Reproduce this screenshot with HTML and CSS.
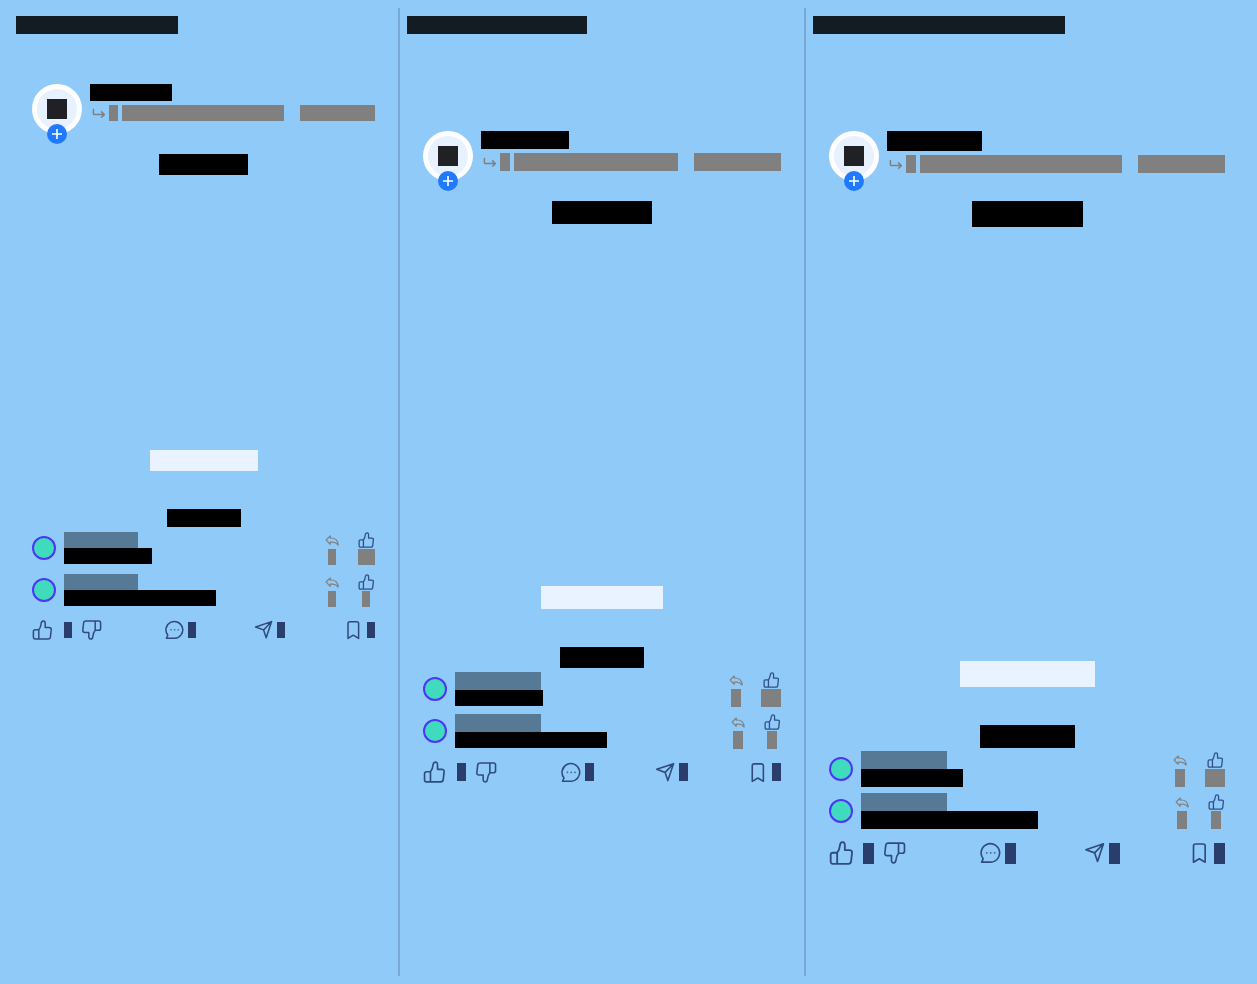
FILE: index.html
```html
<!DOCTYPE html>
<html lang="en">
<head>
<meta charset="utf-8">
<meta name="viewport" content="width=device-width, initial-scale=1">
<title>Posts</title>
<link rel="stylesheet" href="styles.css">
</head>
<body>
<svg class="sprite" aria-hidden="true">
  <symbol id="thumb" viewBox="0 0 20 20"><path d="M6.8 19V9.8M6.8 9.8Q8.8 7.4 9.2 3.2Q9.5 1 11.3 1Q13.3 1 13.2 4V7.6H17Q19.4 7.6 19.2 9.8L18.4 17Q18.2 19 16 19H3.2Q1.4 19 1.4 17V11.6Q1.4 9.8 3.2 9.8Z"/></symbol>
  <symbol id="reply" viewBox="0 0 16 16"><path d="M2.2 8L6.2 3.9V6.1Q9.6 5.6 12 7.6Q14.2 9.8 14.2 13Q12 10.3 9 10.1L6.2 10.2V12.3Z"/></symbol>
  <symbol id="chat" viewBox="0 0 20 20"><path d="M2.4 18.3L3.8 15.2A8.4 8.4 0 1 1 10.7 18.3Z"/><path class="dots" d="M7 9.8h.1M10.6 9.8h.1M14.2 9.8h.1"/></symbol>
  <symbol id="send" viewBox="0 0 20 20"><path d="M18.6 1.6L2.6 7L10.6 9.9L13.2 17.7ZM18.6 1.6L10.6 9.9"/></symbol>
  <symbol id="bookmark" viewBox="0 0 20 20"><path d="M5 18.4V3.6Q5 1.8 6.8 1.8H13.8Q15.6 1.8 15.6 3.6V18.4L10.3 15.2Z"/></symbol>
  <symbol id="turn" viewBox="0 0 15 16"><path d="M3.4 4.5V8.5Q3.4 9.6 4.4 9.6H14.3M11.6 6.9L14.3 9.6L11.6 12.3"/></symbol>
  <symbol id="plus" viewBox="0 0 20 20"><path d="M10 5V15M5 10H15"/></symbol>
</svg>
<main class="columns">
  <section class="column small">
    <h2 class="heading"><span class="bar heading-bar"></span></h2>
    <article class="post">
      <header class="author">
        <div class="avatar"><span class="avatar-mark"></span><button class="follow" aria-label="Follow"><svg><use href="#plus"/></svg></button></div>
        <div class="author-text">
          <span class="bar author-name"></span>
          <div class="meta"><svg class="turn"><use href="#turn"/></svg><span class="bar meta-mark"></span><span class="bar meta-place"></span><span class="bar meta-time"></span></div>
        </div>
      </header>
      <div class="stage"><span class="bar post-title"></span><span class="bar caption"></span></div>
      <span class="bar summary"></span>
      <ul class="comments">
        <li class="comment">
          <div class="comment-body"><span class="dot"></span><div><span class="bar user"></span><span class="bar text-short"></span></div></div>
          <div class="comment-actions"><button class="mini reply" aria-label="Reply"><svg><use href="#reply"/></svg><span class="bar digit"></span></button><button class="mini" aria-label="Like comment"><svg><use href="#thumb"/></svg><span class="bar digits"></span></button></div>
        </li>
        <li class="comment">
          <div class="comment-body"><span class="dot"></span><div><span class="bar user"></span><span class="bar text-long"></span></div></div>
          <div class="comment-actions"><button class="mini reply" aria-label="Reply"><svg><use href="#reply"/></svg><span class="bar digit"></span></button><button class="mini" aria-label="Like comment"><svg><use href="#thumb"/></svg><span class="bar digit"></span></button></div>
        </li>
      </ul>
      <footer class="toolbar">
        <div class="votes"><button class="tool vote-up" aria-label="Like"><svg><use href="#thumb"/></svg><span class="bar count"></span></button><button class="tool vote-down" aria-label="Dislike"><svg><use href="#thumb"/></svg></button></div>
        <button class="tool" aria-label="Comments"><svg><use href="#chat"/></svg><span class="bar count"></span></button>
        <button class="tool" aria-label="Share"><svg><use href="#send"/></svg><span class="bar count"></span></button>
        <button class="tool" aria-label="Save"><svg><use href="#bookmark"/></svg><span class="bar count"></span></button>
      </footer>
    </article>
  </section>
  <section class="column medium">
    <h2 class="heading"><span class="bar heading-bar"></span></h2>
    <article class="post">
      <header class="author">
        <div class="avatar"><span class="avatar-mark"></span><button class="follow" aria-label="Follow"><svg><use href="#plus"/></svg></button></div>
        <div class="author-text">
          <span class="bar author-name"></span>
          <div class="meta"><svg class="turn"><use href="#turn"/></svg><span class="bar meta-mark"></span><span class="bar meta-place"></span><span class="bar meta-time"></span></div>
        </div>
      </header>
      <div class="stage"><span class="bar post-title"></span><span class="bar caption"></span></div>
      <span class="bar summary"></span>
      <ul class="comments">
        <li class="comment">
          <div class="comment-body"><span class="dot"></span><div><span class="bar user"></span><span class="bar text-short"></span></div></div>
          <div class="comment-actions"><button class="mini reply" aria-label="Reply"><svg><use href="#reply"/></svg><span class="bar digit"></span></button><button class="mini" aria-label="Like comment"><svg><use href="#thumb"/></svg><span class="bar digits"></span></button></div>
        </li>
        <li class="comment">
          <div class="comment-body"><span class="dot"></span><div><span class="bar user"></span><span class="bar text-long"></span></div></div>
          <div class="comment-actions"><button class="mini reply" aria-label="Reply"><svg><use href="#reply"/></svg><span class="bar digit"></span></button><button class="mini" aria-label="Like comment"><svg><use href="#thumb"/></svg><span class="bar digit"></span></button></div>
        </li>
      </ul>
      <footer class="toolbar">
        <div class="votes"><button class="tool vote-up" aria-label="Like"><svg><use href="#thumb"/></svg><span class="bar count"></span></button><button class="tool vote-down" aria-label="Dislike"><svg><use href="#thumb"/></svg></button></div>
        <button class="tool" aria-label="Comments"><svg><use href="#chat"/></svg><span class="bar count"></span></button>
        <button class="tool" aria-label="Share"><svg><use href="#send"/></svg><span class="bar count"></span></button>
        <button class="tool" aria-label="Save"><svg><use href="#bookmark"/></svg><span class="bar count"></span></button>
      </footer>
    </article>
  </section>
  <section class="column large">
    <h2 class="heading"><span class="bar heading-bar"></span></h2>
    <article class="post">
      <header class="author">
        <div class="avatar"><span class="avatar-mark"></span><button class="follow" aria-label="Follow"><svg><use href="#plus"/></svg></button></div>
        <div class="author-text">
          <span class="bar author-name"></span>
          <div class="meta"><svg class="turn"><use href="#turn"/></svg><span class="bar meta-mark"></span><span class="bar meta-place"></span><span class="bar meta-time"></span></div>
        </div>
      </header>
      <div class="stage"><span class="bar post-title"></span><span class="bar caption"></span></div>
      <span class="bar summary"></span>
      <ul class="comments">
        <li class="comment">
          <div class="comment-body"><span class="dot"></span><div><span class="bar user"></span><span class="bar text-short"></span></div></div>
          <div class="comment-actions"><button class="mini reply" aria-label="Reply"><svg><use href="#reply"/></svg><span class="bar digit"></span></button><button class="mini" aria-label="Like comment"><svg><use href="#thumb"/></svg><span class="bar digits"></span></button></div>
        </li>
        <li class="comment">
          <div class="comment-body"><span class="dot"></span><div><span class="bar user"></span><span class="bar text-long"></span></div></div>
          <div class="comment-actions"><button class="mini reply" aria-label="Reply"><svg><use href="#reply"/></svg><span class="bar digit"></span></button><button class="mini" aria-label="Like comment"><svg><use href="#thumb"/></svg><span class="bar digit"></span></button></div>
        </li>
      </ul>
      <footer class="toolbar">
        <div class="votes"><button class="tool vote-up" aria-label="Like"><svg><use href="#thumb"/></svg><span class="bar count"></span></button><button class="tool vote-down" aria-label="Dislike"><svg><use href="#thumb"/></svg></button></div>
        <button class="tool" aria-label="Comments"><svg><use href="#chat"/></svg><span class="bar count"></span></button>
        <button class="tool" aria-label="Share"><svg><use href="#send"/></svg><span class="bar count"></span></button>
        <button class="tool" aria-label="Save"><svg><use href="#bookmark"/></svg><span class="bar count"></span></button>
      </footer>
    </article>
  </section>
</main>
</body>
</html>
```
FILE: styles.css
```css
* { box-sizing: border-box; }

body {
  margin: 0;
  padding: 8px;
  background: #90caf9;
  font-family: Roboto, sans-serif;
}

.sprite { position: absolute; width: 0; height: 0; }

svg {
  display: block;
  fill: none;
  stroke: currentColor;
  stroke-linecap: round;
  stroke-linejoin: round;
}

button {
  margin: 0;
  padding: 0;
  border: 0;
  background: none;
  color: inherit;
  cursor: pointer;
}

.columns {
  display: grid;
  grid-template-columns: 391fr 406fr 444fr;
  min-height: calc(100vh - 16px);
}

.column { padding: 8px; min-width: 0; }
.column + .column { box-shadow: -1px 0 #78a9d2, inset 1px 0 #78a9d2; }

/* Type scale of each column */
.small {
  --lead: 50px; --heading: 162px;
  --name: 82px; --name-h: 17px;
  --mark: 9px; --time: 75px; --meta-h: 16px;
  --title: 89px; --title-h: 21px; --caption: 108px; --stage: 317px;
  --summary: 74px; --summary-h: 18px; --summary-gap: 5px;
  --user: 74px; --user-h: 16px; --short: 88px; --long: 152px; --text-h: 16px;
  --actions-gap: 0px;
  --digit: 8px; --digits: 17px; --digit-h: 16px;
  --icon: 20px; --icon-up: 20px; --up-gap: 12px;
  --count: 8px; --count-h: 16px; --votes: 74px; --toolbar-gap: 4px;
}
.medium {
  --lead: 97px; --heading: 180px;
  --name: 88px; --name-h: 18px;
  --mark: 10px; --time: 87px; --meta-h: 18px;
  --title: 100px; --title-h: 23px; --caption: 122px; --stage: 408px;
  --summary: 84px; --summary-h: 21px; --summary-gap: 4px;
  --user: 86px; --user-h: 18px; --short: 88px; --long: 152px; --text-h: 16px;
  --actions-gap: 0px;
  --digit: 10px; --digits: 20px; --digit-h: 18px;
  --icon: 21px; --icon-up: 22px; --up-gap: 12px;
  --count: 9px; --count-h: 18px; --votes: 78px; --toolbar-gap: 5px;
}
.large {
  --lead: 97px; --heading: 252px;
  --name: 95px; --name-h: 20px;
  --mark: 10px; --time: 87px; --meta-h: 18px;
  --title: 111px; --title-h: 26px; --caption: 135px; --stage: 486px;
  --summary: 95px; --summary-h: 23px; --summary-gap: 3px;
  --user: 86px; --user-h: 18px; --short: 102px; --long: 177px; --text-h: 18px;
  --actions-gap: 1px;
  --digit: 10px; --digits: 20px; --digit-h: 18px;
  --icon: 22px; --icon-up: 24px; --up-gap: 10px;
  --count: 11px; --count-h: 21px; --votes: 82px; --toolbar-gap: 6px;
}

.bar { display: block; flex: none; background: #000; }

.heading { margin: 0 0 var(--lead); }
.heading-bar { width: var(--heading); max-width: 100%; height: 18px; background: #141c23; }

.post { display: flex; flex-direction: column; padding: 0 16px; }

.author { display: flex; gap: 8px; margin-bottom: 20px; }
.avatar {
  position: relative;
  display: grid;
  place-items: center;
  flex: none;
  width: 50px;
  height: 50px;
  border: 5px solid #fff;
  border-radius: 50%;
  background: #e7f1ff;
}
.avatar-mark { width: 20px; height: 20px; background: #202124; }
.follow {
  position: absolute;
  left: 10px;
  bottom: -15px;
  width: 20px;
  height: 20px;
  border-radius: 50%;
  background: #1f7aff;
  color: #fff;
}
.follow svg { width: 20px; height: 20px; stroke-width: 1.6; stroke-linecap: butt; }

.author-text { flex: 1; min-width: 0; }
.author-name { width: var(--name); height: var(--name-h); margin-bottom: 4px; }
.meta { display: flex; align-items: center; gap: 4px; color: #808080; }
.meta .bar { height: var(--meta-h); background: #808080; }
.turn { flex: none; width: 15px; height: 16px; stroke-width: 1.5; }
.meta-mark { width: var(--mark); }
.meta .meta-place { flex: 1; }
.meta-time { width: var(--time); margin-left: 12px; }

.stage {
  display: flex;
  flex-direction: column;
  align-items: center;
  justify-content: space-between;
  min-height: var(--stage);
  margin-bottom: 38px;
}
.post-title { width: var(--title); height: var(--title-h); }
.caption { width: var(--caption); height: var(--title-h); background: #e9f3ff; }
.summary {
  align-self: center;
  width: var(--summary);
  height: var(--summary-h);
  margin-bottom: var(--summary-gap);
}

.comments { margin: 0; padding: 0; list-style: none; }
.comment {
  display: flex;
  align-items: flex-start;
  justify-content: space-between;
  min-height: 42px;
}
.comment-body { display: flex; align-items: center; gap: 8px; }
.dot {
  flex: none;
  width: 24px;
  height: 24px;
  border: 2px solid #4c35f5;
  border-radius: 50%;
  background: #40dabf;
}
.user { width: var(--user); height: var(--user-h); background: #567995; }
.text-short { width: var(--short); height: var(--text-h); }
.text-long { width: var(--long); height: var(--text-h); }

.comment-actions { display: flex; gap: 16px; padding-top: var(--actions-gap); }
.mini {
  display: flex;
  flex-direction: column;
  align-items: center;
  gap: 1px;
  min-width: 18px;
  color: #2f4f86;
}
.mini.reply { color: #808080; }
.mini svg { width: 16px; height: 16px; stroke-width: 1.6; }
.mini.reply svg { stroke-width: 1.2; }
.mini .bar { height: var(--digit-h); background: #808080; }
.digit { width: var(--digit); }
.digits { width: var(--digits); }

.toolbar {
  display: flex;
  align-items: center;
  justify-content: space-between;
  margin-top: var(--toolbar-gap);
}
.votes { display: flex; align-items: center; gap: 10px; width: var(--votes); }
.tool { display: flex; align-items: center; gap: 4px; color: #2f4b7c; }
.tool svg { flex: none; width: var(--icon); height: var(--icon); stroke-width: 1.5; }
.vote-up { gap: var(--up-gap); }
.tool.vote-up svg { width: var(--icon-up); height: var(--icon-up); }
.tool.vote-up { gap: var(--up-gap); }
.vote-down svg { transform: rotate(180deg); }
.count { width: var(--count); height: var(--count-h); background: #2b3d6b; }
.dots { stroke-width: 1.6; opacity: 0.8; }
```
